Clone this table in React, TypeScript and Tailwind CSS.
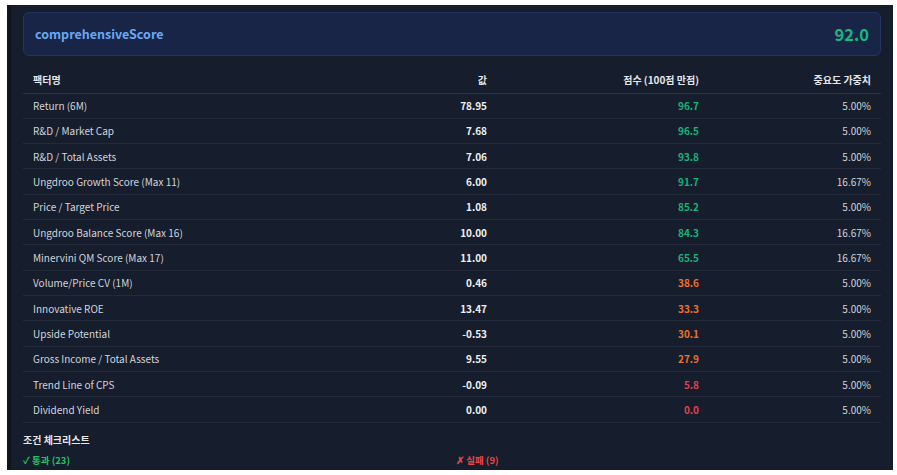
const rows = [
  { name: 'Return (6M)', value: '78.95', score: 96.7, weight: '5.00%' },
  { name: 'R&D / Market Cap', value: '7.68', score: 96.5, weight: '5.00%' },
  { name: 'R&D / Total Assets', value: '7.06', score: 93.8, weight: '5.00%' },
  { name: 'Ungdroo Growth Score (Max 11)', value: '6.00', score: 91.7, weight: '16.67%' },
  { name: 'Price / Target Price', value: '1.08', score: 85.2, weight: '5.00%' },
  { name: 'Ungdroo Balance Score (Max 16)', value: '10.00', score: 84.3, weight: '16.67%' },
  { name: 'Minervini QM Score (Max 17)', value: '11.00', score: 65.5, weight: '16.67%' },
  { name: 'Volume/Price CV (1M)', value: '0.46', score: 38.6, weight: '5.00%' },
  { name: 'Innovative ROE', value: '13.47', score: 33.3, weight: '5.00%' },
  { name: 'Upside Potential', value: '-0.53', score: 30.1, weight: '5.00%' },
  { name: 'Gross Income / Total Assets', value: '9.55', score: 27.9, weight: '5.00%' },
  { name: 'Trend Line of CPS', value: '-0.09', score: 5.8, weight: '5.00%' },
  { name: 'Dividend Yield', value: '0.00', score: 0.0, weight: '5.00%' },
];

const scoreColor = (s: number) => {
  if (s >= 50) return 'text-[#16b47a]';
  if (s >= 20) return 'text-[#f0702a]';
  return 'text-[#e2424a]';
};

export default function App() {
  return (
    <div className="min-h-screen bg-white pt-[5px] pl-[7px]">
      <div
        className="w-[886px] h-[465px] overflow-hidden bg-[#161d2c] border-l-4 border-[#10141d] pl-3 pr-3 pt-[7px] text-[10px] text-[#d1d5db]"
        style={{ fontFamily: '"Noto Sans CJK KR", "Noto Sans", sans-serif' }}
      >
        <div className="flex items-center justify-between h-[44px] rounded-md border border-[#1f3461] bg-[#192546] px-[11px]">
          <span className="text-[12.5px] font-semibold text-[#69a8f5]">comprehensiveScore</span>
          <span className="text-[16.5px] font-semibold text-[#13b981]">92.0</span>
        </div>

        <table className="w-full table-fixed mt-[11px] border-collapse">
          <colgroup>
            <col className="w-[262px]" />
            <col className="w-[212px]" />
            <col className="w-[212px]" />
            <col className="w-[172px]" />
          </colgroup>
          <thead>
            <tr className="h-[26px] border-b border-[#2a3344] text-[#e5e7eb]">
              <th className="text-left px-[10px] font-bold">팩터명</th>
              <th className="text-right px-[10px] font-bold">값</th>
              <th className="text-right px-[10px] font-bold">점수 (100점 만점)</th>
              <th className="text-right px-[10px] font-bold">중요도 가중치</th>
            </tr>
          </thead>
          <tbody>
            {rows.map((r) => (
              <tr key={r.name} className="h-[25.33px] border-b border-[#232b3a]">
                <td className="px-[10px]">{r.name}</td>
                <td className="px-[10px] text-right font-semibold text-[#eef0f3]">{r.value}</td>
                <td className={`px-[10px] text-right font-semibold ${scoreColor(r.score)}`}>{r.score.toFixed(1)}</td>
                <td className="px-[10px] text-right">{r.weight}</td>
              </tr>
            ))}
          </tbody>
        </table>

        <div className="mt-[10px] leading-[14px] font-bold text-[#e5e7eb]">조건 체크리스트</div>
        <div className="grid grid-cols-2 gap-2 mt-[7px] leading-[12px] text-[9.5px] font-semibold">
          <div className="text-[#22c55e]">✓ 통과 (23)</div>
          <div className="text-[#ef4444]">✗ 실패 (9)</div>
        </div>
      </div>
    </div>
  );
}
